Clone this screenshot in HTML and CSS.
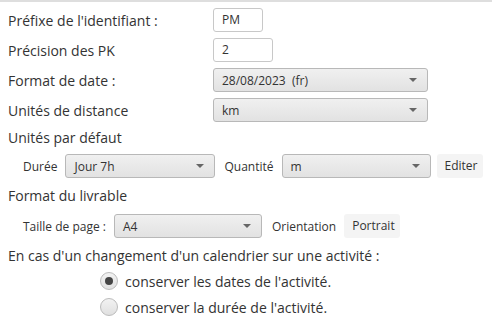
FILE: index.html
```html
<!DOCTYPE html>
<html lang="fr">
<head>
<meta charset="utf-8">
<link rel="stylesheet" href="styles.css">
</head>
<body>
<div class="panel">
  <div class="row">
    <span class="label">Préfixe de l'identifiant :</span>
    <span class="input w-pm">PM</span>
  </div>
  <div class="row">
    <span class="label">Précision des PK</span>
    <span class="input w-pk">2</span>
  </div>
  <div class="row">
    <span class="label">Format de date :</span>
    <span class="select w-wide"><span class="val">28/08/2023&nbsp; (fr)</span><span class="arrow"></span></span>
  </div>
  <div class="row">
    <span class="label">Unités de distance</span>
    <span class="select w-wide"><span class="val">km</span><span class="arrow"></span></span>
  </div>

  <div class="heading">Unités par défaut</div>
  <div class="subrow">
    <span class="small">Durée</span>
    <span class="select w-duree"><span class="val">Jour 7h</span><span class="arrow"></span></span>
    <span class="small lab-q">Quantité</span>
    <span class="select w-qte"><span class="val">m</span><span class="arrow"></span></span>
    <span class="button btn-edit">Editer</span>
  </div>

  <div class="heading h2">Format du livrable</div>
  <div class="subrow">
    <span class="small">Taille de page :</span>
    <span class="select w-taille"><span class="val">A4</span><span class="arrow"></span></span>
    <span class="small lab-o">Orientation</span>
    <span class="button btn-port">Portrait</span>
  </div>

  <div class="heading h3">En cas d'un changement d'un calendrier sur une activité :</div>
  <div class="radios">
    <div class="radio-row"><span class="radio checked"></span><span class="rtext">conserver les dates de l'activité.</span></div>
    <div class="radio-row"><span class="radio"></span><span class="rtext">conserver la durée de l'activité.</span></div>
  </div>
</div>
</body>
</html>
```
FILE: styles.css
```css
html, body {
  margin: 0;
  padding: 0;
  background: #fff;
}
body {
  font-family: "Open Sans", "Noto Sans", sans-serif;
  color: #333;
  width: 492px;
  height: 322px;
  overflow: hidden;
}
.panel {
  border-top: 2px solid #dedede;
  padding: 6px 0 0 8px;
  display: flex;
  flex-direction: column;
  gap: 6px;
}
.row {
  display: flex;
  align-items: center;
  height: 24px;
}
.label {
  width: 205px;
  font-size: 14px;
}
.input {
  box-sizing: border-box;
  height: 24px;
  border: 1px solid #c8c8c8;
  border-radius: 3px;
  background: #fff;
  font-size: 12px;
  line-height: 22px;
  padding-left: 8px;
  color: #333;
}
.w-pm { width: 50px; }
.w-pk { width: 60px; }
.select {
  box-sizing: border-box;
  height: 24px;
  border: 1px solid #b8b8b8;
  border-radius: 3px;
  background: linear-gradient(#f0f0f0, #e2e2e2);
  display: flex;
  align-items: center;
  justify-content: space-between;
  padding: 0 10px 0 8px;
  font-size: 12px;
  color: #333;
}
.arrow {
  width: 0;
  height: 0;
  border-left: 4px solid transparent;
  border-right: 4px solid transparent;
  border-top: 4px solid #666;
}
.w-wide { width: 215px; }
.w-duree { width: 150px; }
.w-qte { width: 149px; }
.w-taille { width: 148px; }
.heading {
  font-size: 14px;
  height: 20px;
  line-height: 20px;
}
.h2 { margin-top: 2px; margin-bottom: 2px; }
.h3 { margin-top: 2px; }
.subrow {
  display: flex;
  align-items: center;
  height: 24px;
  padding-left: 15px;
}
.small {
  font-size: 12px;
  margin-right: 8px;
}
.lab-q { margin-left: 9px; margin-right: 8px; }
.lab-o { margin-left: 10px; margin-right: 8px; }
.button {
  box-sizing: border-box;
  height: 24px;
  background: #f4f4f4;
  border-radius: 3px;
  font-size: 12px;
  line-height: 24px;
  padding: 0 8px;
  color: #333;
  text-align: center;
}
.btn-edit { margin-left: 6px; width: 46px; }
.btn-port { width: 56px; }
.radios {
  display: flex;
  flex-direction: column;
  gap: 8px;
  padding-left: 92px;
  margin-top: 0;
}
.radio-row {
  display: flex;
  align-items: center;
  height: 18px;
}
.radio {
  box-sizing: border-box;
  width: 18px;
  height: 18px;
  border-radius: 50%;
  border: 1px solid #bbb;
  background: linear-gradient(#f2f2f2, #e0e0e0);
  margin-right: 7px;
  display: flex;
  align-items: center;
  justify-content: center;
}
.radio.checked::after {
  content: "";
  width: 8px;
  height: 8px;
  border-radius: 50%;
  background: #444;
}
.rtext {
  font-size: 14px;
}
```
